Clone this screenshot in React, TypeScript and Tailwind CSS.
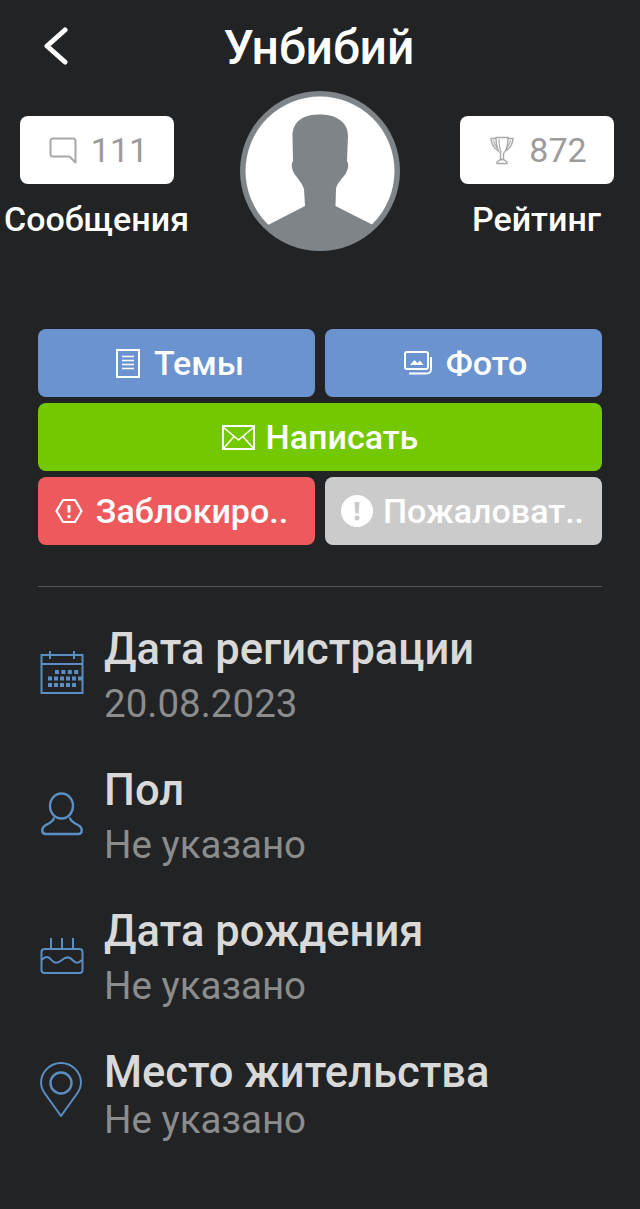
import React from "react"

const BLUE = "#5b8ec4"

// Иконки, нарисованные вручную
const ChatIcon = () => (
  <svg width="28" height="27" viewBox="0 0 28 27" fill="none" stroke="#a8a8a8" strokeWidth="2">
    <path d="M4 1.500h20a2.500 2.500 0 0 1 2.500 2.500v21.500l-6-6H4A2.500 2.500 0 0 1 1.500 17V4A2.500 2.500 0 0 1 4 1.500z" strokeLinejoin="round" />
  </svg>
)

const TrophyIcon = () => (
  <svg width="24" height="29" viewBox="0 0 24 29" fill="none" stroke="#a8a8a8" strokeWidth="1.400">
    <path d="M6 1.500h12c0 7-.8 12.500-4.500 16v6h-3v-6C6.800 14 6 8.500 6 1.500z" />
    <path d="M9 3c0 6 .8 10 2.500 13.500" strokeWidth="1.100" />
    <path d="M6 2.500H1c.3 5 2.500 9.500 7.500 12.500M18 2.500h5c-.3 5-2.500 9.500-7.500 12.500" />
    <path d="M3.500 4c.5 3.500 2 6 4 8M20.500 4c-.5 3.500-2 6-4 8" strokeWidth="1.100" />
    <path d="M7 27.500h10v-1.500l-3.500-2.500h-3L7 26z" />
  </svg>
)

const DocIcon = () => (
  <svg width="24" height="29" viewBox="0 0 24 29" fill="none" stroke="#fff" strokeWidth="2">
    <rect x="1" y="1" width="22" height="27" />
    <path d="M6 7.500h12M6 11.500h12M6 15.500h12M6 19.500h12" strokeWidth="1.600" />
  </svg>
)

const PhotosIcon = () => (
  <svg width="28" height="24" viewBox="0 0 28 24" fill="none" stroke="#fff" strokeWidth="2">
    <rect x="1" y="1" width="23" height="17" rx="2" />
    <path d="M5 22.500h18a4 4 0 0 0 4-4V6" />
    <path d="M6 14l4.500-5 3 3 2.500-2.500 3.500 4.500z" fill="#fff" stroke="none" />
  </svg>
)

const MailIcon = () => (
  <svg width="33" height="25" viewBox="0 0 33 25" fill="none" stroke="#fff" strokeWidth="2">
    <rect x="1" y="1" width="31" height="23" />
    <path d="M1 2l15.500 13L32 2M1 24l11.500-13M32 24L20.500 11" strokeWidth="1.600" />
  </svg>
)

const HexAlertIcon = () => (
  <svg width="28" height="26" viewBox="0 0 28 26" fill="none" stroke="#fff" strokeWidth="2.200">
    <path d="M8 2h12l6.500 11L20 24H8L1.500 13z" strokeLinejoin="round" />
    <path d="M14 7v7.500" strokeWidth="3" />
    <circle cx="14" cy="18.500" r="1.700" fill="#fff" stroke="none" />
  </svg>
)

const AlertCircleIcon = () => (
  <svg width="32" height="32" viewBox="0 0 32 32">
    <circle cx="16" cy="16" r="16" fill="#fff" />
    <path d="M13.500 7h5l-.8 11.500h-3.400z" fill="#cbcbcb" />
    <circle cx="16" cy="23" r="2.500" fill="#cbcbcb" />
  </svg>
)

const CalendarIcon = () => (
  <svg width="44" height="44" viewBox="0 0 44 44" fill="none" stroke={BLUE} strokeWidth="2">
    <rect x="1.500" y="4" width="41" height="38" />
    <path d="M1.500 13h41M10 0v8M34 0v8" />
    <g fill={BLUE} stroke="none">
      {[0, 1, 2, 3].map((i) => (
        <rect key={"a" + i} x={15 + i * 6.400} y="19" width="4" height="4" />
      ))}
      {[0, 1, 2, 3, 4, 5].map((i) => (
        <rect key={"b" + i} x={8 + i * 6.000} y="25.500" width="4" height="4" />
      ))}
      {[0, 1, 2, 3, 4].map((i) => (
        <rect key={"c" + i} x={8 + i * 6.000} y="32" width="4" height="4" />
      ))}
    </g>
  </svg>
)

const UserIcon = () => (
  <svg width="44" height="44" viewBox="0 0 44 44" fill="none" stroke={BLUE} strokeWidth="2.400">
    <ellipse cx="21.500" cy="14" rx="11.500" ry="12.500" />
    <path d="M14 25.500c0 3-3 5-8 7.500-5 2.500-5 9 0 9h32c5 0 5-6.500 0-9-5-2.500-8-4.500-8-7.500" strokeLinejoin="round" />
  </svg>
)

const CakeIcon = () => (
  <svg width="44" height="38" viewBox="0 0 44 38" fill="none" stroke={BLUE} strokeWidth="2">
    <rect x="1.500" y="13" width="41" height="24" rx="3" />
    <path d="M1.500 24c4-4 7-4 10 0s7 3 10.500 0 7-4 10.500 0 7 3 9 0" />
    <path d="M11 2v10M22 2v10M33 2v10" />
  </svg>
)

const PinIcon = () => (
  <svg width="42" height="56" viewBox="0 0 42 56" fill="none" stroke={BLUE} strokeWidth="2">
    <path d="M21 54L4.500 31C1 26 1 23 1 21a20 20 0 0 1 40 0c0 2 0 5-3.500 10z" strokeLinejoin="round" />
    <circle cx="21" cy="21" r="10.500" strokeWidth="2.400" />
  </svg>
)

const AvatarPhoto = () => (
  <svg width="160" height="160" viewBox="0 0 160 160">
    <defs>
      <filter id="avatar-soft" x="-5%" y="-5%" width="110%" height="110%">
        <feGaussianBlur stdDeviation="0.7" />
      </filter>
    </defs>
    <circle cx="80" cy="80" r="80" fill="#7f8489" />
    <g filter="url(#avatar-soft)">
      <circle cx="80" cy="80" r="74.500" fill="#fff" />
      <path
        d="M52.500 45C52.500 34 59 24 78 23.500C90 23 108 27 108 45L107 70C109 72 108.500 78 105.500 83C102 88 97 92 96 98L95.500 115L133 134L118 150L80 157L42 150L28 134L65 115L64 98C62 92 58 88 54.500 83C51.500 78 51 72 53 70z"
        fill="#7f8489"
      />
    </g>
  </svg>
)

interface StatProps {
  icon: React.ReactNode
  value: string
  label: string
  gap: string
}

const Stat: React.FC<StatProps> = ({ icon, value, label, gap }) => (
  <div className="flex w-[193px] flex-col items-center">
    <div className={`flex h-[68px] w-[154px] items-center justify-center rounded-[8px] bg-white pl-[4px] text-[34px] leading-none text-[#9b9b9b] ${gap}`}>
      {icon}
      <span>{value}</span>
    </div>
    <span className="mt-[15px] text-[34px] leading-[40px] font-medium whitespace-nowrap text-white">{label}</span>
  </div>
)

const ActionButton: React.FC<{
  icon: React.ReactNode
  label: string
  className: string
}> = ({ icon, label, className }) => (
  <button className={`flex h-[68px] items-center justify-center rounded-[8px] text-[34px] font-medium whitespace-nowrap text-white ${className}`}>
    {icon}
    <span>{label}</span>
  </button>
)

const INFO = [
  { icon: <CalendarIcon />, title: "Дата регистрации", value: "20.08.2023", rowClass: "h-[141px]", iconBox: "h-[102px]", valueClass: "leading-[52px]" },
  { icon: <UserIcon />, title: "Пол", value: "Не указано", rowClass: "h-[141px]", iconBox: "h-[102px]", valueClass: "leading-[52px]" },
  { icon: <CakeIcon />, title: "Дата рождения", value: "Не указано", rowClass: "h-[141px]", iconBox: "h-[102px]", valueClass: "leading-[52px]" },
  { icon: <PinIcon />, title: "Место жительства", value: "Не указано", rowClass: "h-[120px]", iconBox: "h-[90px]", valueClass: "leading-[38px]" },
]

export default function App() {
  return (
    <div className="h-[1209px] w-[640px] overflow-hidden bg-[#212325] font-['Roboto',sans-serif]">
      {/* шапка */}
      <div className="relative flex h-[91px] items-start justify-center pt-[22px] pr-[2px]">
        <svg className="absolute top-[27px] left-[44px]" width="24" height="38" viewBox="0 0 24 38" fill="none" stroke="#fff" strokeWidth="5" strokeLinecap="round" strokeLinejoin="round">
          <path d="M21 3L3 19l18 16" />
        </svg>
        <h1 className="text-[48px] leading-[52px] font-medium text-white">Унбибий</h1>
      </div>

      {/* профиль */}
      <div className="flex h-[160px] items-start justify-between pr-[7px]">
        <div className="pt-[25px]">
          <Stat icon={<ChatIcon />} value="111" label="Сообщения" gap="gap-[14px]" />
        </div>
        <div className="shrink-0 pl-[7px]">
          <AvatarPhoto />
        </div>
        <div className="pt-[25px]">
          <Stat icon={<TrophyIcon />} value="872" label="Рейтинг" gap="gap-[15px]" />
        </div>
      </div>

      {/* кнопки */}
      <div className="mt-[78px] grid grid-cols-2 gap-x-[10px] gap-y-[6px] px-[38px]">
        <ActionButton icon={<DocIcon />} label="Темы" className="gap-[14px] bg-[#6a93d0] pl-[7px]" />
        <ActionButton icon={<PhotosIcon />} label="Фото" className="gap-[14px] bg-[#6a93d0] pl-[4px]" />
        <ActionButton icon={<MailIcon />} label="Написать" className="col-span-2 gap-[11px] bg-[#74c800]" />
        <ActionButton icon={<HexAlertIcon />} label="Заблокиро.." className="gap-[13px] bg-[#ee5a5c] pr-[10px]" />
        <ActionButton icon={<AlertCircleIcon />} label="Пожаловат.." className="gap-[10px] bg-[#cbcbcb] pr-[2px]" />
      </div>

      <div className="mx-[38px] mt-[41px] h-px bg-[#55575a]" />

      {/* информация */}
      <div className="mt-[35px] px-[38px]">
        {INFO.map((row) => (
          <div key={row.title} className={`flex items-start ${row.rowClass}`}>
            <div className={`flex w-[66px] shrink-0 items-center pl-[2px] ${row.iconBox}`}>{row.icon}</div>
            <div className="flex flex-col">
              <span className="text-[43.5px] leading-[56px] font-medium text-[#d9d9d9]">{row.title}</span>
              <span className={`text-[38.5px] text-[#8c8c8c] ${row.valueClass}`}>{row.value}</span>
            </div>
          </div>
        ))}
      </div>
    </div>
  )
}
